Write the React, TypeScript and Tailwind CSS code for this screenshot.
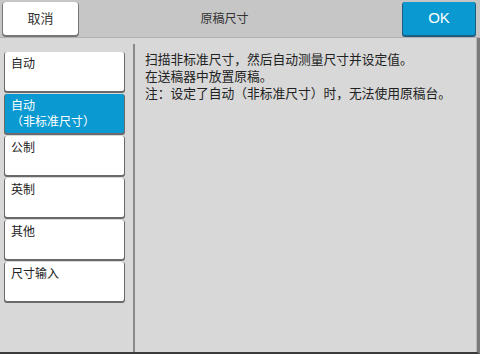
import React, { useState } from 'react';

const items = ['自动', '自动\n（非标准尺寸）', '公制', '英制', '其他', '尺寸输入'];

export default function App() {
  const [selected, setSelected] = useState(1);

  return (
    <div
      className="w-[480px] h-[354px] flex flex-col bg-[#d8d8d8] text-[#222] overflow-hidden"
      style={{ fontFamily: '"Liberation Sans", "Noto Sans CJK SC", sans-serif' }}
    >
      <div className="h-[38px] flex items-start justify-between bg-[#c6c6c6] border-b border-[#b0b0b0] pt-[2px] pl-[3px] pr-[5px]">
        <button className="w-[75px] h-[33px] bg-white rounded-[3px] shadow-[0_1px_0_1px_#777] text-[13px] text-[#333]">
          取消
        </button>
        <div className="flex-1 h-[33px] flex items-center justify-center text-[12px] text-[#333] pr-[32px]">
          原稿尺寸
        </div>
        <button className="w-[72px] h-[33px] bg-[#0a9ad1] rounded-[2px] shadow-[0_1px_0_1px_#1d5e80] text-[15px] text-white">
          OK
        </button>
      </div>

      <div className="flex-1 flex border-r-[3px] border-r-[#7a7a7a] border-b-[2px] border-b-[#3a3a3a]">
        <div className="w-[133px] flex flex-col gap-[2px] pt-[14px] pl-[5px]">
          {items.map((label, i) => (
            <button
              key={label}
              onClick={() => setSelected(i)}
              className={`w-[119px] h-[39px] rounded-[2px] shadow-[0_1px_0_1px_#6a6a6a] mb-[1px] text-left text-[12px] leading-[16px] pl-[6px] pt-[4px] whitespace-pre-line flex items-start ${
                selected === i ? 'bg-[#0a9ad1] text-white' : 'bg-white text-[#222]'
              }`}
            >
              {label}
            </button>
          ))}
        </div>
        <div className="w-[2px] bg-[#8a8a8a] mt-[6px]" />
        <div className="flex-1 flex flex-col gap-[0px] pl-[10px] pt-[13px] text-[12.75px] text-[#222] border-r border-r-[#b8b8b8]">
          <p className="leading-[17px]">扫描非标准尺寸，然后自动测量尺寸并设定值。</p>
          <p className="leading-[17px]">在送稿器中放置原稿。</p>
          <p className="leading-[17px]">注：设定了自动（非标准尺寸）时，无法使用原稿台。</p>
        </div>
      </div>
    </div>
  );
}
